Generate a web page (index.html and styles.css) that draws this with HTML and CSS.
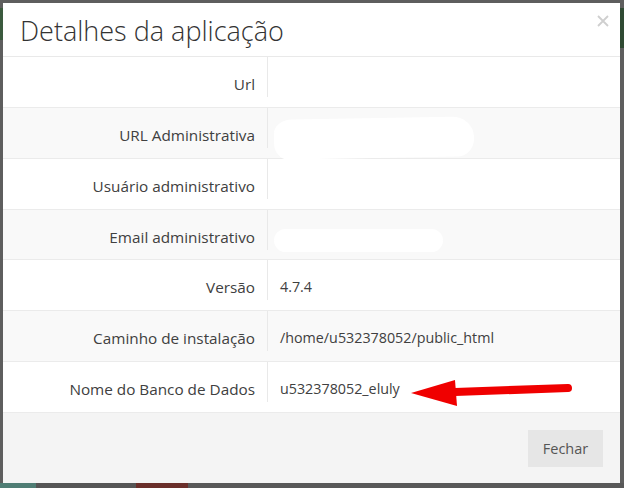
FILE: index.html
```html
<!DOCTYPE html>
<html lang="pt">
<head>
<meta charset="utf-8">
<title>Detalhes da aplicação</title>
<link rel="stylesheet" href="styles.css">
</head>
<body>
<div class="backdrop">
  <div class="bg-green-left"></div>
  <div class="bg-green-right"></div>
  <div class="bg-bottom">
    <span class="bb bb-teal"></span>
    <span class="bb bb-gray"></span>
    <span class="bb bb-red"></span>
    <span class="bb bb-gray2"></span>
  </div>
  <div class="modal">
    <div class="modal-header">
      <h4 class="modal-title">Detalhes da aplicação</h4>
      <svg class="close" width="12" height="12" viewBox="0 0 12 12"><path d="M1 1L11 11M11 1L1 11" stroke="#cfcfcf" stroke-width="1.8" fill="none"/></svg>
    </div>
    <div class="modal-body">
      <div class="row"><div class="label">Url</div><div class="value"></div></div>
      <div class="row striped"><div class="label">URL Administrativa</div><div class="value"><span class="blob blob-a"></span></div></div>
      <div class="row"><div class="label">Usuário administrativo</div><div class="value"></div></div>
      <div class="row striped"><div class="label">Email administrativo</div><div class="value"><span class="blob blob-b"></span></div></div>
      <div class="row"><div class="label">Versão</div><div class="value">4.7.4</div></div>
      <div class="row striped"><div class="label">Caminho de instalação</div><div class="value">/home/u532378052/public_html</div></div>
      <div class="row last"><div class="label">Nome do Banco de Dados</div><div class="value">u532378052_eluly</div></div>
    </div>
    <div class="modal-footer">
      <button class="btn">Fechar</button>
    </div>
    <svg class="arrow" width="170" height="34" viewBox="0 0 170 34">
      <path d="M44 19 L157 15" stroke="#f00000" stroke-width="8" stroke-linecap="round" fill="none"/>
      <path d="M0 20 L44 7 L46 33 Z" fill="#f00000"/>
    </svg>
  </div>
</div>
</body>
</html>
```
FILE: styles.css
```css
html, body {
  margin: 0;
  padding: 0;
}
body {
  width: 624px;
  height: 488px;
  overflow: hidden;
  font-family: "Open Sans", "Liberation Sans", sans-serif;
}
.backdrop {
  position: relative;
  width: 624px;
  height: 488px;
  background: #5e5e5e;
  padding: 3px 4px 0 3px;
  box-sizing: border-box;
}
.bg-green-left {
  position: absolute;
  left: 0; top: 8px;
  width: 3px; height: 32px;
  background: #3b5a3e;
}
.bg-green-right {
  position: absolute;
  right: 0; top: 8px;
  width: 4px; height: 40px;
  background: #2f4a33;
}
.bg-bottom {
  position: absolute;
  left: 0; bottom: 0;
  width: 624px; height: 5px;
  display: flex;
}
.bb { display: block; height: 5px; }
.bb-teal { width: 36px; background: #4f7d74; }
.bb-gray { width: 100px; background: #555; }
.bb-red { width: 52px; background: #6a2e2a; }
.bb-gray2 { flex: 1; background: #585858; }

.modal {
  position: relative;
  width: 617px;
  height: 480px;
  background: #fff;
  display: flex;
  flex-direction: column;
}
.modal-header {
  height: 53px;
  border-bottom: 1px solid #e9e9e9;
  display: flex;
  align-items: flex-start;
  justify-content: space-between;
  padding: 0 11px 0 17px;
}
.modal-title {
  margin: 0;
  padding-top: 9px;
  font-size: 27px;
  line-height: 38px;
  font-weight: 300;
  color: #333;
}
.close {
  margin-top: 12px;
}
.modal-body {
  display: flex;
  flex-direction: column;
}
.row {
  height: 50.86px;
  box-sizing: border-box;
  border-bottom: 1px solid #ebebeb;
  display: flex;
  align-items: flex-start;
  position: relative;
}
.row.striped { background: #f9f9f9; }
.label {
  width: 265px;
  box-sizing: border-box;
  height: 40px;
  border-right: 1px solid #e9e9e9;
  text-align: right;
  padding: 16px 12px 0 0;
  font-size: 15.3px;
  line-height: 22px;
  color: #404040;
}
.value {
  flex: 1;
  padding: 16px 0 0 12px;
  font-size: 14.3px;
  line-height: 22px;
  color: #404040;
  position: relative;
}
.blob {
  position: absolute;
  background: #fff;
  display: block;
}
.blob-a {
  left: 6px; top: 10px;
  width: 200px; height: 40px;
  border-radius: 18px 22px 16px 14px / 14px 20px 18px 16px;
  transform: rotate(-1deg);
}
.blob-b {
  left: 6px; top: 19px;
  width: 169px; height: 23px;
  border-radius: 12px;
}
.modal-footer {
  flex: 1;
  background: #f4f4f4;
  display: flex;
  justify-content: flex-end;
  align-items: flex-start;
  padding: 17px 17px 0 0;
}
.btn {
  width: 75px;
  height: 37px;
  border: none;
  background: #e6e6e6;
  color: #555;
  font-family: "Open Sans", "Liberation Sans", sans-serif;
  font-size: 14.5px;
  padding: 0;
}
.arrow {
  position: absolute;
  left: 408px;
  top: 370px;
}
```
